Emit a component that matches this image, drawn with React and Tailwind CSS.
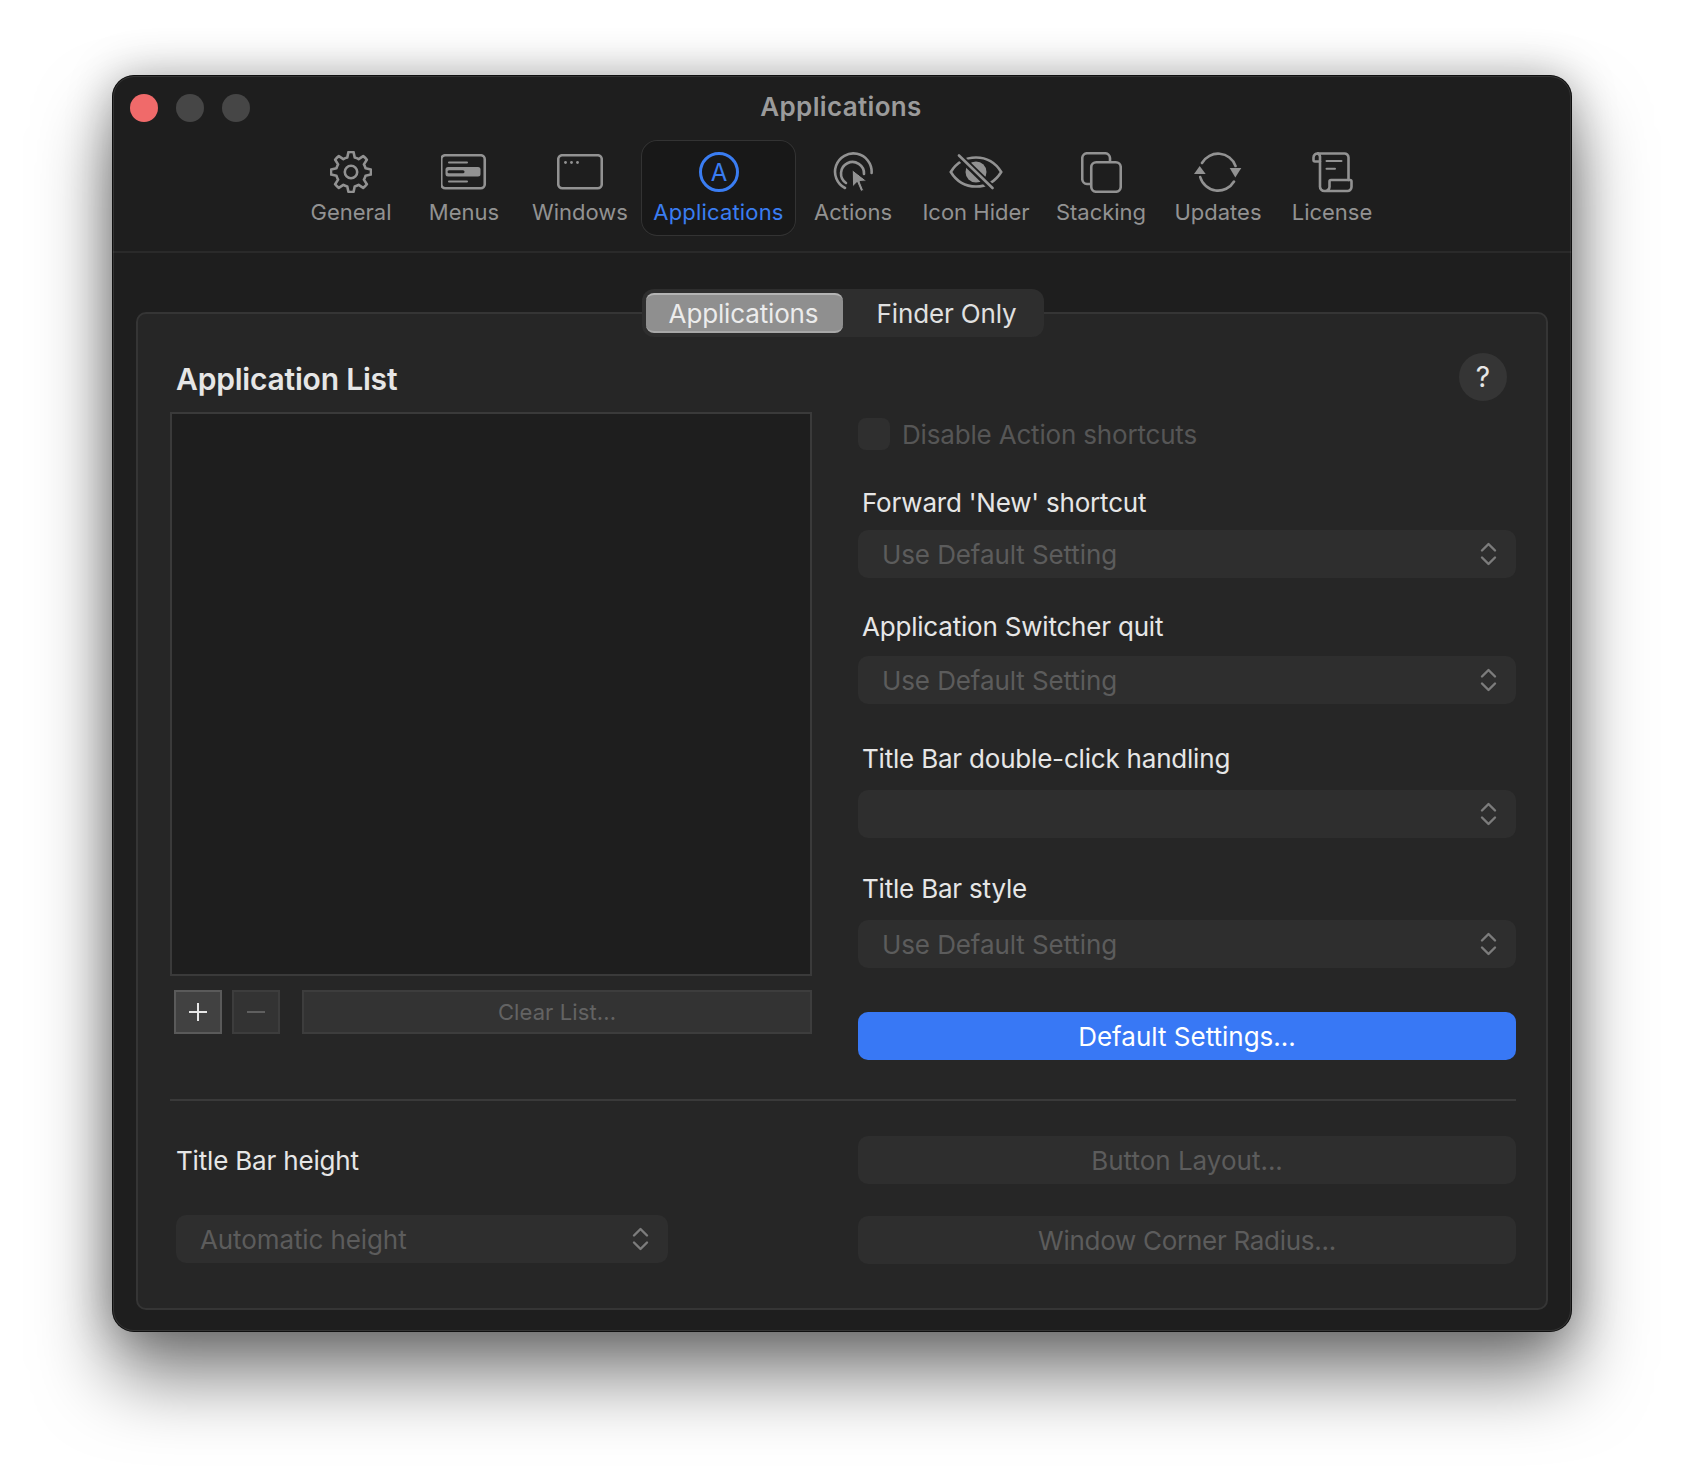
import React from "react";

const FONT = { fontFamily: "Inter, 'Liberation Sans', sans-serif" };
const G = "#929292";

function gearPath() {
  const cx = 21, cy = 21, ro = 20, ri = 15;
  let d = "";
  for (let i = 0; i < 8; i++) {
    const a = (i * Math.PI) / 4 - Math.PI / 2;
    const pt = (r, t) => `${(cx + r * Math.cos(a + t)).toFixed(2)} ${(cy + r * Math.sin(a + t)).toFixed(2)}`;
    d += `${i === 0 ? "M" : "A" + ri + " " + ri + " 0 0 1"} ${pt(ri, -0.25)} L ${pt(ro, -0.13)} A${ro} ${ro} 0 0 1 ${pt(ro, 0.13)} L ${pt(ri, 0.25)} `;
  }
  const a0 = -Math.PI / 2 - 0.25;
  return d + `A${ri} ${ri} 0 0 1 ${(cx + ri * Math.cos(a0)).toFixed(2)} ${(cy + ri * Math.sin(a0)).toFixed(2)} Z`;
}

const Gear = () => (
  <svg width="42" height="42" viewBox="0 0 42 42" fill="none" stroke={G} strokeWidth="2.6" strokeLinejoin="round">
    <path d={gearPath()} />
    <circle cx="21" cy="21" r="6.2" />
  </svg>
);
const Menus = () => (
  <svg width="46" height="36" viewBox="1 0 46 36" fill="none" stroke={G} strokeWidth="2.6" strokeLinecap="round">
    <rect x="1.25" y="1.25" width="43.5" height="33" rx="4" />
    <path d="M9 8.5H27M9 27.5H27" strokeWidth="2" />
    <rect x="5.5" y="13" width="35" height="9.5" rx="2.5" fill={G} stroke="none" />
    <path d="M9 17.7H23" stroke="#1e1e1e" strokeWidth="3" />
  </svg>
);
const Windows = () => (
  <svg width="46" height="36" viewBox="0 0 46 36" fill="none" stroke={G} strokeWidth="2.6">
    <rect x="1.25" y="1.25" width="43.5" height="33" rx="4" />
    <circle cx="8.5" cy="8.5" r="1.4" fill={G} stroke="none" />
    <circle cx="14.5" cy="8.5" r="1.4" fill={G} stroke="none" />
    <circle cx="20.5" cy="8.5" r="1.4" fill={G} stroke="none" />
  </svg>
);
const AppIcon = () => (
  <svg width="40" height="40" viewBox="0 0 40 40" fill="none">
    <circle cx="20" cy="20" r="18.5" stroke="#3a7df2" strokeWidth="3" />
    <text x="20" y="28.5" textAnchor="middle" fontSize="24" fill="#3a7df2" style={FONT}>A</text>
  </svg>
);
const Actions = () => (
  <svg width="40" height="40" viewBox="0 0 40 40" fill="none" stroke={G} strokeWidth="2.6" strokeLinecap="round">
    <path d="M12 36A18.3 18.3 0 1 1 38.6 21" />
    <path d="M13 31A11.5 11.5 0 1 1 31 22" />
    <path d="M19.2 18L19.6 35L24 30.5L27.8 39.5L30.6 38.3L27 29.5L33.5 29Z" fill={G} stroke="#1e1e1e" strokeWidth="1" strokeLinejoin="round" />
  </svg>
);
const Eye = () => (
  <svg width="54" height="36" viewBox="0 0 54 36" fill="none" stroke={G} strokeWidth="2.6" strokeLinecap="round">
    <path d="M1.8 18C7 9.5 16 3.5 27 3.5S47 9.5 52.2 18C47 26.5 38 32.5 27 32.5S7 26.5 1.8 18Z" />
    <circle cx="27" cy="18" r="10.5" fill={G} stroke="none" />
    <path d="M9 1L44 35" stroke="#1e1e1e" strokeWidth="7" strokeLinecap="butt" />
    <path d="M10 1.5L43.5 34" />
  </svg>
);
const Stack = () => (
  <svg width="41" height="41" viewBox="0 0 41 41" fill="none" stroke={G} strokeWidth="2.6">
    <path d="M9 32H6a5 5 0 0 1-4.75-5V6a5 5 0 0 1 5-4.75H24a5 5 0 0 1 5 4.75V9" />
    <rect x="10.25" y="10.25" width="29.5" height="29.5" rx="5" />
  </svg>
);
const Updates = () => (
  <svg width="48" height="40" viewBox="0 0 48 40" fill="none" stroke={G} strokeWidth="2.6" strokeLinecap="round">
    <path d="M8 11A18.5 18.5 0 0 1 41.5 14" />
    <path d="M40 29.5A18.5 18.5 0 0 1 6.2 25" />
    <path d="M35.7 16H47.3L41.3 25.5Z" fill={G} stroke="none" />
    <path d="M0 22H11.7L5.7 14Z" fill={G} stroke="none" />
  </svg>
);
const License = () => (
  <svg width="41" height="41" viewBox="0 0 41 41" fill="none" stroke={G} strokeWidth="2.6" strokeLinecap="round" strokeLinejoin="round">
    <path d="M6 1.5H32a4 4 0 0 1 4.5 4V28" />
    <path d="M6 1.5a4 4 0 0 0-4.5 4V8a1.5 1.5 0 0 0 1.5 1.5H8" />
    <path d="M6 1.5a4 4 0 0 1 2 4V34a4.5 4.5 0 0 0 4.5 5H35a4 4 0 0 0 4.5-4V29.5a1.5 1.5 0 0 0-1.5-1.5H19a1.5 1.5 0 0 0-1.5 1.5V34a4.5 4.5 0 0 1-5 5" />
    <path d="M14.5 9H29.5M14.5 16.7H23" strokeWidth="2" />
  </svg>
);

const TOOLS = [
  { label: "General", Icon: Gear, w: "w-[108px]" },
  { label: "Menus", Icon: Menus, w: "w-[118px]" },
  { label: "Windows", Icon: Windows, w: "w-[114px]" },
  { label: "Applications", Icon: AppIcon, w: "w-[155px]", active: true, track: "tracking-[0.17px]" },
  { label: "Actions", Icon: Actions, w: "w-[114px]" },
  { label: "Icon Hider", Icon: Eye, w: "w-[132px]" },
  { label: "Stacking", Icon: Stack, w: "w-[118px]" },
  { label: "Updates", Icon: Updates, w: "w-[116px]" },
  { label: "License", Icon: License, w: "w-[112px]" },
];

function Tool({ label, Icon, w, active, track = "" }) {
  return (
    <div
      className={`${w} ${active ? "ml-[4px] bg-[#181818] shadow-[inset_0_0_0_1px_#333333] rounded-[16px] text-[#3a7df2]" : "text-[#929292]"} h-[96px] flex flex-col items-center`}
    >
      <div className="h-[64px] flex items-center justify-center">
        <Icon />
      </div>
      <div className={`text-[22px] leading-[28px] mt-[-6px] whitespace-nowrap ${track}`}>{label}</div>
    </div>
  );
}

const Chevrons = () => (
  <svg width="17" height="24" viewBox="0 0 17 24" fill="none" stroke="#7c7c7c" strokeWidth="2.4" strokeLinecap="round" strokeLinejoin="round">
    <path d="M2 8.5L8.5 2L15 8.5" />
    <path d="M2 15.5L8.5 22L15 15.5" />
  </svg>
);

function Select({ value, className = "" }) {
  return (
    <div className={`h-[48px] rounded-[10px] bg-[#2e2e2e] flex items-center pl-[24px] pr-[19px] text-[26px] tracking-[-0.1px] text-[#5c5c5c] ${className}`}>
      <span className="flex-1 whitespace-nowrap">{value}</span>
      <Chevrons />
    </div>
  );
}

function Label({ children, className = "" }) {
  return <div className={`h-[30px] leading-[30px] pl-[4px] text-[26px] tracking-[-0.2px] text-[#e6e6e6] whitespace-nowrap ${className}`}>{children}</div>;
}

function GhostButton({ children, className = "" }) {
  return (
    <div className={`h-[48px] rounded-[10px] bg-[#2e2e2e] flex items-center justify-center text-[26px] text-[#5c5c5c] ${className}`}>
      {children}
    </div>
  );
}

export default function App() {
  return (
    <div className="w-[1684px] h-[1480px] bg-white overflow-hidden pt-[75px] pl-[112px]" style={FONT}>
      <div className="relative w-[1460px] h-[1257px] rounded-[22px] bg-[#1e1e1e] flex flex-col shadow-[0_45px_75px_rgba(0,0,0,0.5),0_0_45px_rgba(0,0,0,0.28)] overflow-hidden">
        <header className="border-b-2 border-[#2a2a2a] pb-[15px]">
          <div className="h-[65px] relative flex items-center pl-[18px] gap-[18px]">
            <span className="w-[28px] h-[28px] rounded-full bg-[#f06a6a]" />
            <span className="w-[28px] h-[28px] rounded-full bg-[#464646]" />
            <span className="w-[28px] h-[28px] rounded-full bg-[#464646]" />
            <div className="absolute inset-x-0 top-[14px] text-center text-[26px] leading-[36px] font-semibold tracking-[0.35px] text-[#9b9b9b] pr-[2px]">Applications</div>
          </div>
          <div className="flex justify-center pl-[1px]">
            {TOOLS.map((t) => (
              <Tool key={t.label} {...t} />
            ))}
          </div>
        </header>

        <main className="mt-[59px] mx-[24px] h-[998px] border-2 border-[#353535] rounded-[10px] bg-[#262626] pl-[32px] pr-[30px]">
          <div className="flex justify-center -mt-[25px]">
            <div className="h-[48px] w-[402px] rounded-[12px] bg-[#2e2e2e] p-[4px] flex items-stretch text-[26px] tracking-[-0.15px]">
              <div className="w-[197px] rounded-[8px] bg-[#8f8f8f] border-t-2 border-b-2 border-t-[#b4b4b4] border-b-[#a8a8a8] text-[#ececec] flex items-center justify-center pr-[2px]">Applications</div>
              <div className="flex-1 flex items-center justify-center text-[#e0e0e0] pl-[10px]">Finder Only</div>
            </div>
          </div>

          <div className="flex items-start gap-[46px]">
            <section className="w-[642px]">
              <h2 className="mt-[22px] h-[40px] leading-[40px] pl-[6px] text-[30px] tracking-[-0.2px] font-semibold text-[#e6e6e6]">Application List</h2>
              <div className="mt-[13px] h-[564px] border-2 border-[#3a3a3a] bg-[#1e1e1e]" />
              <div className="mt-[14px] flex items-stretch h-[44px] pl-[4px]">
                <div className="w-[48px] border-2 border-[#5a5a5a] bg-[#414141] flex items-center justify-center">
                  <svg width="20" height="20" viewBox="0 0 20 20" stroke="#e6e6e6" strokeWidth="2"><path d="M10 1V19M1 10H19" /></svg>
                </div>
                <div className="w-[48px] ml-[10px] border-2 border-[#3d3d3d] bg-[#333333] flex items-center justify-center">
                  <svg width="20" height="20" viewBox="0 0 20 20" stroke="#5f5f5f" strokeWidth="2"><path d="M1 10H19" /></svg>
                </div>
                <div className="flex-1 ml-[22px] border-2 border-[#3d3d3d] bg-[#333333] flex items-center justify-center text-[22px] tracking-[0.1px] text-[#636363]">Clear List...</div>
              </div>
            </section>

            <section className="w-[658px]">
              <div className="mt-[16px] flex justify-end pr-[9px]">
                <div className="w-[48px] h-[48px] rounded-full bg-[#353535] flex items-center justify-center text-[28px] text-[#e6e6e6]">?</div>
              </div>
              <div className="mt-[17px] flex items-center h-[32px] gap-[12px] text-[26px] tracking-[-0.18px] text-[#565656]">
                <span className="w-[32px] h-[32px] rounded-[8px] bg-[#2f2f2f]" />
                <span>Disable Action shortcuts</span>
              </div>
              <Label className="mt-[38px]">Forward 'New' shortcut</Label>
              <Select value="Use Default Setting" className="mt-[12px]" />
              <Label className="mt-[34px]">Application Switcher quit</Label>
              <Select value="Use Default Setting" className="mt-[14px]" />
              <Label className="mt-[40px]">Title Bar double-click handling</Label>
              <Select value="" className="mt-[16px]" />
              <Label className="mt-[36px]">Title Bar style</Label>
              <Select value="Use Default Setting" className="mt-[16px]" />
              <div className="mt-[44px] h-[48px] rounded-[10px] bg-[#3878f5] flex items-center justify-center text-[26px] text-white">Default Settings...</div>
            </section>
          </div>

          <div className="mt-[39px] h-[2px] bg-[#3a3a3a]" />

          <div className="mt-[35px] flex items-start gap-[46px]">
            <section className="w-[642px] pl-[6px]">
              <div className="h-[48px] flex items-center text-[26px] tracking-[-0.18px] text-[#e6e6e6]">Title Bar height</div>
              <Select value="Automatic height" className="mt-[31px] w-[492px]" />
            </section>
            <section className="w-[658px]">
              <GhostButton>Button Layout...</GhostButton>
              <GhostButton className="mt-[32px] tracking-[-0.28px]">Window Corner Radius...</GhostButton>
            </section>
          </div>
        </main>
        <div className="absolute inset-0 rounded-[22px] pointer-events-none shadow-[inset_0_0_0_1px_rgba(0,0,0,0.7),inset_0_0_0_2px_rgba(255,255,255,0.1)]" />
      </div>
    </div>
  );
}
